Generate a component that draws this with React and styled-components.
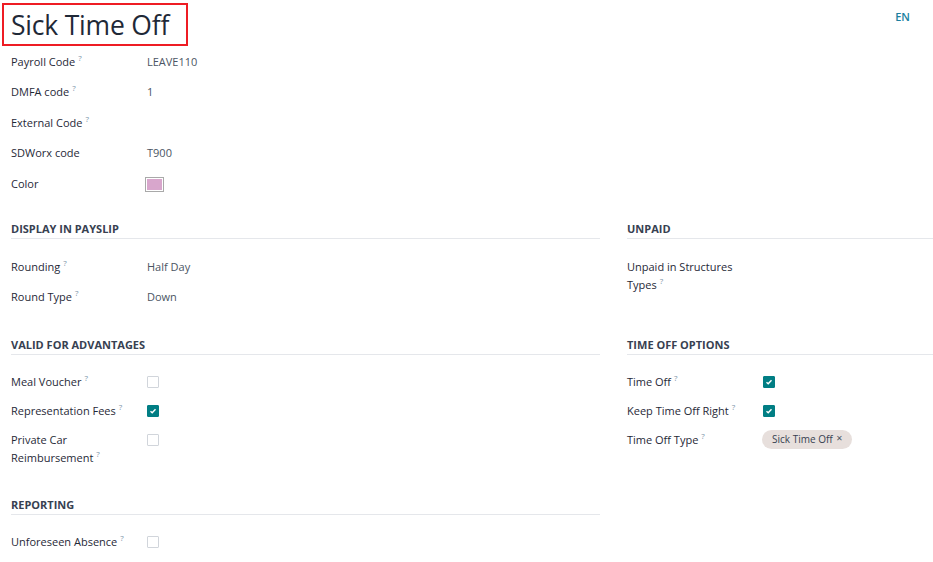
import styled, { createGlobalStyle } from "styled-components";

const GlobalStyle = createGlobalStyle`
  body {
    margin: 0;
    background: #ffffff;
    font-family: "Open Sans", "Liberation Sans", sans-serif;
  }
`;

const Page = styled.div`
  width: 933px;
  height: 562px;
  overflow: hidden;
  background: #ffffff;
  color: #1f2937;
  font-size: 11px;
`;

const TopBar = styled.div`
  display: flex;
  justify-content: space-between;
  align-items: flex-start;
  padding-top: 3px;
  padding-left: 2px;
`;

const TitleBox = styled.div`
  border: 2px solid #ee1c24;
  width: 186px;
  height: 43px;
  box-sizing: border-box;
  padding-left: 7px;
  display: flex;
  align-items: center;
`;

const Title = styled.h1`
  margin: 0;
  font-size: 26.5px;
  font-weight: 400;
  color: #1f2937;
  letter-spacing: -0.2px;
`;

const Lang = styled.span`
  margin-top: 6px;
  margin-right: 23px;
  font-size: 11px;
  font-weight: 600;
  color: #1b7fa0;
`;

const Body = styled.div`
  padding-left: 11px;
`;

const Grid = styled.div`
  display: grid;
  grid-template-columns: 589px 306px;
  align-items: start;
  column-gap: 27px;
  row-gap: 24.5px;
  margin-top: 22.5px;
`;

const Section = styled.div``;

const SectionHead = styled.div`
  font-size: 11px;
  font-weight: 700;
  line-height: 16px;
  text-transform: uppercase;
  color: #374151;
  padding-bottom: 1px;
  border-bottom: 1px solid #e5e7eb;
  margin-bottom: 12px;
`;

const Row = styled.div`
  display: grid;
  grid-template-columns: 136px 1fr;
  align-items: start;
  padding: ${(p) => (p.$compact ? "6px 0" : "6.75px 0")};
  line-height: 17px;
`;

const Label = styled.div`
  font-weight: 500;
  color: #1f2937;
  width: ${(p) => (p.$narrow ? "120px" : "auto")};
  line-height: ${(p) => (p.$narrow ? "18px" : "17px")};
`;

const Help = styled.sup`
  display: inline-block;
  font-size: 8px;
  line-height: 8px;
  color: #7b93a8;
  margin-left: 3px;
  vertical-align: 5px;
`;

const Value = styled.div`
  display: flex;
  align-items: center;
  height: 17px;
  color: #4b5563;
`;

const Swatch = styled.div`
  width: 19px;
  height: 15px;
  margin-left: -2px;
  margin-top: 2px;
  box-sizing: border-box;
  border: 1px solid #a9a9a9;
  padding: 1px;
  background: #ffffff;
  &::after {
    content: "";
    display: block;
    width: 100%;
    height: 100%;
    background: #d8a6cc;
  }
`;

const Check = styled.span`
  display: inline-flex;
  align-items: center;
  justify-content: center;
  width: 12px;
  height: 12px;
  margin-top: 1px;
  box-sizing: border-box;
  border: 1px solid ${(p) => (p.$on ? "#017e84" : "#d1d5db")};
  background: ${(p) => (p.$on ? "#017e84" : "#ffffff")};
  border-radius: 1px;
`;

const Tag = styled.span`
  display: inline-flex;
  align-items: center;
  gap: 3px;
  height: 19px;
  margin-left: -1px;
  padding: 0 9px 0 10px;
  border-radius: 10px;
  background: #e7dfdc;
  color: #374151;
  font-size: 10px;
`;

const Close = styled.span`
  font-size: 8px;
  color: #4b5563;
  margin-top: -5px;
`;

const CheckMark = () => (
  <svg width="8" height="8" viewBox="0 0 8 8">
    <path d="M1.5 4.2 L3.2 5.8 L6.5 2.2" fill="none" stroke="#ffffff" strokeWidth="1.4" />
  </svg>
);

const Field = ({ label, help, narrow, compact, children }) => (
  <Row $compact={compact}>
    <Label $narrow={narrow}>
      {label}
      {help && <Help>?</Help>}
    </Label>
    <Value>{children}</Value>
  </Row>
);

const Box = ({ on }) => <Check $on={on}>{on && <CheckMark />}</Check>;

export default function App() {
  return (
    <Page>
      <GlobalStyle />
      <TopBar>
        <TitleBox>
          <Title>Sick Time Off</Title>
        </TitleBox>
        <Lang>EN</Lang>
      </TopBar>
      <Body>
        <Field label="Payroll Code" help>LEAVE110</Field>
        <Field label="DMFA code" help>1</Field>
        <Field label="External Code" help />
        <Field label="SDWorx code">T900</Field>
        <Field label="Color">
          <Swatch />
        </Field>
        <Grid>
          <Section>
            <SectionHead>Display in Payslip</SectionHead>
            <Field label="Rounding" help>Half Day</Field>
            <Field label="Round Type" help>Down</Field>
          </Section>
          <Section>
            <SectionHead>Unpaid</SectionHead>
            <Field label="Unpaid in Structures Types" help narrow />
          </Section>
          <Section>
            <SectionHead>Valid for Advantages</SectionHead>
            <Field label="Meal Voucher" help compact><Box /></Field>
            <Field label="Representation Fees" help compact><Box on /></Field>
            <Field label="Private Car Reimbursement" help narrow compact><Box /></Field>
          </Section>
          <Section>
            <SectionHead>Time Off Options</SectionHead>
            <Field label="Time Off" help compact><Box on /></Field>
            <Field label="Keep Time Off Right" help compact><Box on /></Field>
            <Field label="Time Off Type" help>
              <Tag>
                Sick Time Off <Close>✕</Close>
              </Tag>
            </Field>
          </Section>
          <Section>
            <SectionHead>Reporting</SectionHead>
            <Field label="Unforeseen Absence" help compact><Box /></Field>
          </Section>
        </Grid>
      </Body>
    </Page>
  );
}
